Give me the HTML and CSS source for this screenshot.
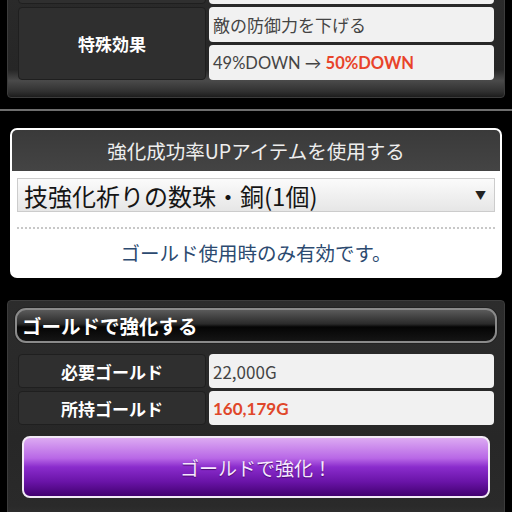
FILE: index.html
```html
<!DOCTYPE html>
<html lang="ja">
<head>
<meta charset="utf-8">
<link rel="stylesheet" href="styles.css">
</head>
<body>
<div class="panel panel-top">
  <div class="row row-cut">
    <div class="label"></div>
    <div class="values"><div class="value"></div></div>
  </div>
  <div class="row">
    <div class="label">特殊効果</div>
    <div class="values">
      <div class="value">敵の防御力を下げる</div>
      <div class="value"><span class="latin">49%DOWN → <span class="red">50%DOWN</span></span></div>
    </div>
  </div>
</div>
<div class="divider"></div>
<div class="card">
  <div class="card-head">強化成功率UPアイテムを使用する</div>
  <div class="select"><span>技強化祈りの数珠・銅(1個)</span><span class="arrow">▼</span></div>
  <div class="dots"></div>
  <div class="note">ゴールド使用時のみ有効です。</div>
</div>
<div class="panel panel-gold">
  <div class="gold-head">ゴールドで強化する</div>
  <div class="rows">
    <div class="row">
      <div class="label">必要ゴールド</div>
      <div class="values"><div class="value">22,000G</div></div>
    </div>
    <div class="row">
      <div class="label">所持ゴールド</div>
      <div class="values"><div class="value red-plain">160,179G</div></div>
    </div>
  </div>
  <div class="btn">ゴールドで強化！</div>
</div>
</body>
</html>
```
FILE: styles.css
```css
html, body {
  margin: 0;
  padding: 0;
  background: #000;
  font-family: "Noto Sans CJK JP", "Noto Sans", sans-serif;
  overflow: hidden;
}
.panel {
  margin: 0 7px;
  background: linear-gradient(#2c2c2c, #262626 80%, #4a4a4a 88%, #303030 96%, #1c1c1c);
  border: 1px solid #3c3c3c;
  border-radius: 4px;
  box-sizing: border-box;
}
.panel-top {
  margin-top: -40px;
  padding: 8px 10px 17px 10px;
  display: flex;
  flex-direction: column;
  gap: 3px;
}
.row {
  display: flex;
  gap: 3px;
}
.label {
  width: 188px;
  flex: none;
  background: #2f2f2f;
  border: 1px solid #1f1f1f;
  border-radius: 4px;
  box-sizing: border-box;
  color: #fff;
  font-weight: bold;
  font-size: 17px;
  display: flex;
  align-items: center;
  justify-content: center;
}
.values {
  flex: 1;
  display: flex;
  flex-direction: column;
  gap: 3px;
}
.value {
  height: 35px;
  background: #f1f1f1;
  border-radius: 4px;
  color: #444;
  font-size: 17px;
  padding-left: 4px;
  display: flex;
  align-items: center;
  box-sizing: border-box;
}
.latin { font-family: "Lato", "Noto Sans CJK JP", sans-serif; font-size: 16.5px; }
.red { color: #e8432a; font-weight: bold; }
.red-plain { color: #e0472a; font-family: "Lato", "Noto Sans CJK JP", sans-serif; font-weight: bold; }
.divider {
  margin-top: 11px;
  height: 2px;
  background: #6e6e6e;
}
.card {
  margin: 17px 10px 0 10px;
  background: #fff;
  border-radius: 7px;
  padding: 2px 2px 0 2px;
  height: 150px;
  box-sizing: border-box;
}
.card-head {
  height: 41px;
  background: linear-gradient(#3a3a3a, #444);
  border-radius: 5px 5px 0 0;
  color: #eee;
  font-size: 19.5px;
  display: flex;
  align-items: center;
  justify-content: center;
}
.select {
  margin: 7px 5px 0 5px;
  height: 34px;
  border: 1px solid #ccc;
  background: linear-gradient(#fbfbfb, #e6e6e6);
  box-sizing: border-box;
  display: flex;
  align-items: center;
  justify-content: space-between;
  padding: 0 8px 0 6px;
  color: #151515;
  font-size: 24px;
}
.arrow { font-size: 11px; color: #222; }
.dots {
  margin: 15px 5px 0 5px;
  border-top: 2px dotted #c8c8c8;
}
.note {
  margin-top: 9px;
  text-align: center;
  color: #2c4a70;
  font-size: 19.5px;
}
.panel-gold {
  margin-top: 22px;
  height: 230px;
  padding: 7px 7px 0 7px;
  background: linear-gradient(#2c2c2c, #272727 60%, #2a2a2a 90%, #3a3a3a);
}
.gold-head {
  height: 35px;
  border-radius: 11px;
  border: 2px solid #8a8a8a;
  box-shadow: 0 0 0 1px #222;
  background: linear-gradient(#5a5a5a, #2a2a2a 45%, #050505 55%, #151515);
  box-sizing: border-box;
  color: #fff;
  font-weight: bold;
  font-size: 19.5px;
  display: flex;
  align-items: center;
  padding-left: 5px;
}
.rows {
  margin: 11px 3px 0 3px;
  display: flex;
  flex-direction: column;
  gap: 3px;
}
.rows .label { height: 34px; font-size: 17px; }
.rows .value { height: 34px; font-size: 17px; }
.btn {
  margin: 11px 7px 0 7px;
  height: 62px;
  border: 2px solid #f2eaf6;
  border-radius: 8px;
  box-sizing: border-box;
  background: linear-gradient(#dcaaf2, #b867e6 35%, #8a2ccc 50%, #6a14a8 75%, #420070);
  color: #f6e8ff;
  font-size: 19px;
  text-shadow: 0 1px 1px #4a0a70;
  display: flex;
  align-items: center;
  justify-content: center;
}
```
